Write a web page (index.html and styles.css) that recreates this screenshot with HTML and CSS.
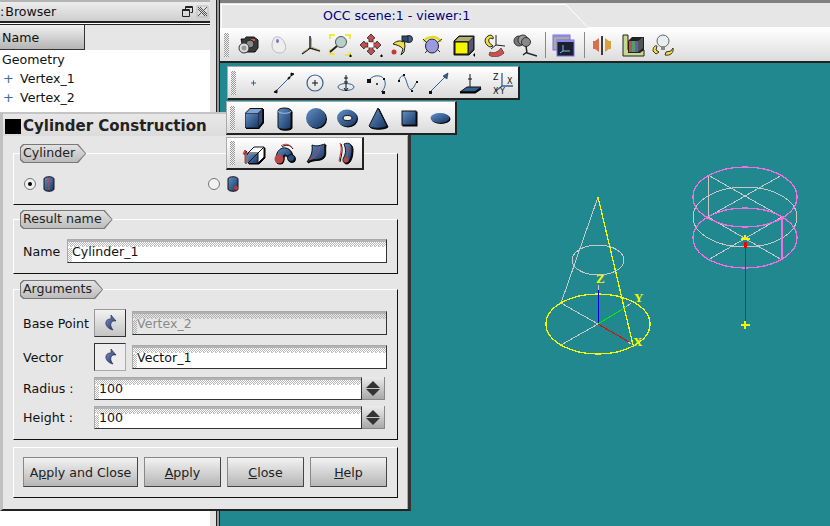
FILE: index.html
```html
<!DOCTYPE html>
<html lang="en">
<head>
    <meta charset="UTF-8">
    <title>OCC scene:1 - viewer:1</title>
    <link rel="stylesheet" href="styles.css">
</head>
<body>
<div class="desktop">

    <!-- object browser -->
    <div class="side">
        <div class="browser">
            <div class="dock-title">
                <span class="dock-name">: Browser</span>
                <span class="dock-btn">
                    <svg width="13" height="13" viewBox="0 0 13 13"><path d="M4.5 1.5h7v6h-2M1.5 4.5h7v7h-7z M4.5 1.5v3" fill="none" stroke="#222"/><path d="M4 2.5h7M1 5.5h7" stroke="#222"/></svg>
                </span>
                <span class="dock-btn">
                    <svg width="13" height="13" viewBox="0 0 13 13"><path d="M2 2l9 9M11 2l-9 9M2 4l7 7M4 2l7 7" stroke="#555" fill="none"/><path d="M1 1h11v11h-11z" fill="none" stroke="#bbb"/></svg>
                </span>
            </div>
            <div class="list-head"><span class="head-cell">Name</span></div>
            <ul class="tree">
                <li>Geometry</li>
                <li class="leaf"><span class="expand">+</span>Vertex_1</li>
                <li class="leaf"><span class="expand">+</span>Vertex_2</li>
            </ul>
        </div>
    </div>

    <!-- viewer -->
    <div class="viewer">
        <div class="tabs">
            <svg class="tab-edge" width="610" height="25" viewBox="0 0 610 25"><path d="M1.5 25V1.5H346L368 24.5H610" fill="none" stroke="#fff"/></svg>
            <span class="tab-text">OCC scene:1 - viewer:1</span>
        </div>
        <div class="main-bar">
            <span class="grip"></span>
            <span class="tool">
                <svg width="24" height="24" viewBox="0 0 24 24"><path d="M5 6h4l1-2h8l4 3v8l-3 4H8z" fill="#3a3a3a" stroke="#111"/><rect x="15" y="6" width="4" height="2" fill="#c55"/><circle cx="14" cy="11" r="4" fill="#888" stroke="#222"/><circle cx="8" cy="15" r="5" fill="#ddd" stroke="#333"/><circle cx="8" cy="15" r="2.5" fill="#999"/></svg>
            </span>
            <span class="tool">
                <svg width="24" height="24" viewBox="0 0 24 24"><path d="M7 5c4-3 9 0 11 6 2 5-1 9-5 9-5 0-8-3-8-8 0-3 1-5 2-7z" fill="#eee" stroke="#bbb"/><ellipse cx="10.500" cy="8" rx="1.500" ry="2" fill="#6f7fc8"/></svg>
            </span>
            <span class="tool">
                <svg width="24" height="24" viewBox="0 0 24 24"><path d="M12 3v12L4 21M12 15l10 3" fill="none" stroke="#222" stroke-width="1.500"/><path d="M13.500 5v9l8 3M10 16l-5 3" fill="none" stroke="#b8b070"/></svg>
            </span>
            <span class="tool">
                <svg width="24" height="24" viewBox="0 0 24 24"><path d="M2 6V2h5M17 2h5v4M2 16v5h5M17 22h5v-3" fill="none" stroke="#f2e600" stroke-width="1.500"/><circle cx="13" cy="9" r="5.500" fill="#b8d0cc" stroke="#555"/><path d="M9 13l-7 6" stroke="#222" stroke-width="2"/><path d="M21 23h3M22.500 21.500v3" stroke="#000"/></svg>
            </span>
            <span class="tool">
                <svg width="24" height="24" viewBox="0 0 24 24"><path d="M12 1l4 4-2 1v3h-4V6L8 5zM12 22l-4-4 2-1v-3h4v3l2 1zM1 12l4-4 1 2h3v4H6l-1 2zM22 12l-4 4-1-2h-3v-4h3l1-2z" fill="#c25050" stroke="#222" stroke-width=".8"/><rect x="9.500" y="9.500" width="5" height="5" fill="#fff"/><path d="M21 23h3M22.500 21.500v3" stroke="#000"/></svg>
            </span>
            <span class="tool">
                <svg width="24" height="24" viewBox="0 0 24 24"><circle cx="19" cy="6" r="3.500" fill="#44628a" stroke="#222"/><rect x="12" y="3" width="6" height="6" fill="#2d4a70" stroke="#222"/><path d="M3 11c3-3 7-4 10-2l1-2 1 6-1 6-3 3 2-6c-2-3-6-4-10-5z" fill="#f2e040" stroke="#222"/><circle cx="4" cy="19" r="2.500" fill="#c83838"/></svg>
            </span>
            <span class="tool">
                <svg width="24" height="24" viewBox="0 0 24 24"><ellipse cx="12" cy="13" rx="6.500" ry="7" fill="#9a9ae0" stroke="#222"/><path d="M4 9c2-6 13-7 17 0" fill="none" stroke="#e6d820" stroke-width="2.500"/><path d="M3 6l3 3M22 6l-4 3M5 20l3-3M20 19l-3-3" stroke="#333"/></svg>
            </span>
            <span class="tool">
                <svg width="24" height="24" viewBox="0 0 24 24"><path d="M3 8l5-5h15v14l-5 5H3z" fill="#333" stroke="#111"/><path d="M4 9h13v12H4z" fill="#f6f600" stroke="#111"/><path d="M4 8l4-4h14l-4 4z" fill="#b0b070"/><path d="M18 9l4-4v11l-4 4z" fill="#55557a"/><path d="M25 22h-3M23.500 20.500v3" stroke="#000"/></svg>
            </span>
            <span class="tool">
                <svg width="24" height="24" viewBox="0 0 24 24"><path d="M14 2v10l9 1M14 12l-5 4" fill="none" stroke="#222"/><path d="M6 3c3-2 6 0 5 3-3-2-5 0-4 3 1 2 3 3 4 4l-3 1C3 12 1 6 6 3z" fill="#f2e040" stroke="#222"/><path d="M8 19c4 2 8 0 11-4l3 5c-4 4-11 5-15 2z" fill="#d84c4c" stroke="#555"/></svg>
            </span>
            <span class="tool">
                <svg width="24" height="24" viewBox="0 0 24 24"><circle cx="6" cy="8" r="5" fill="#777" stroke="#333"/><circle cx="10" cy="7" r="5" fill="#999" stroke="#333"/><circle cx="13" cy="9" r="4.500" fill="#888" stroke="#333"/><path d="M13 13l1 7 10 3M14 19l-4 3" fill="none" stroke="#222" stroke-width="1.500"/></svg>
            </span>
            <span class="sep"></span>
            <span class="tool">
                <svg width="24" height="24" viewBox="0 0 24 24"><rect x="2" y="2" width="17" height="15" fill="#aaa" stroke="#7a6fe0"/><rect x="2" y="2" width="17" height="2" fill="#8f87e8"/><rect x="6" y="7" width="17" height="16" fill="#1a2030" stroke="#7a6fe0"/><rect x="6" y="7" width="17" height="2" fill="#8f87e8"/><path d="M12 12v6h7M12 18l-3 2" fill="none" stroke="#80c0e0"/></svg>
            </span>
            <span class="sep"></span>
            <span class="tool">
                <svg width="24" height="24" viewBox="0 0 24 24"><path d="M3 8h2l4-3v14l-4-3H3z" fill="#d87050"/><path d="M12 3v19" stroke="#000" stroke-width="1.500"/><path d="M21 8h-2l-4-3v14l4-3h2z" fill="#d8a040"/></svg>
            </span>
            <span class="tool">
                <svg width="24" height="24" viewBox="0 0 24 24"><path d="M2 2h5v15h16v6H2z" fill="#c8d890" stroke="#222"/><path d="M7 8l4-4h12v13l-4 3H7z" fill="#222"/><path d="M8 8h3v11H8z" fill="#c05050"/><path d="M11 8h3v11h-3z" fill="#50a060"/><path d="M14 8h3v11h-3z" fill="#6060c0"/><path d="M17 8l5-4v11l-5 4z" fill="#555"/></svg>
            </span>
            <span class="tool">
                <svg width="24" height="24" viewBox="0 0 24 24"><circle cx="12" cy="8" r="6" fill="#e8eef0" stroke="#666"/><rect x="10" y="13" width="4" height="4" fill="#888"/><path d="M2 18c0-4 2-6 4-5l-1 4 3 2-3 2z" fill="#f2e040" stroke="#333"/><path d="M22 15c1 5-3 8-8 7l1-3 5-1z" fill="#f2e040" stroke="#333"/></svg>
            </span>
        </div>
        <div class="view-body">
            <svg class="scene" width="610" height="463" viewBox="220 63 610 463" shape-rendering="crispEdges">
                <defs>
                    <linearGradient id="blue" x1="0" y1="0" x2="1" y2="1">
                        <stop offset="0" stop-color="#6390c8"/>
                        <stop offset="1" stop-color="#173560"/>
                    </linearGradient>
                    <linearGradient id="arrow" x1="0" y1="0" x2="1" y2="1">
                        <stop offset="0" stop-color="#7f96d0"/>
                        <stop offset="1" stop-color="#1c2a52"/>
                    </linearGradient>
                </defs>
                <!-- cone -->
                <g fill="none" stroke="#c8c8c8">
                    <ellipse cx="598" cy="260" rx="26" ry="15"/>
                    <path d="M598 197L561 303L598 324L561 345"/>
                    <path d="M598 285v6M626 307l5-4M631 344l-3-2"/>
                </g>
                <g fill="none" stroke="#f6f600" stroke-width="1.300">
                    <ellipse cx="598" cy="324" rx="52" ry="30"/>
                    <path d="M598 197L633 345"/>
                </g>
                <path d="M598 324v-34" stroke="#0000e0" fill="none"/>
                <path d="M598 324l28-17" stroke="#00f000" fill="none"/>
                <path d="M598 324l31 18" stroke="#f00000" fill="none"/>
                <text class="axis" x="596" y="283">Z</text>
                <text class="axis" x="634" y="302">Y</text>
                <text class="axis" x="633" y="346">X</text>
                <!-- two stacked cylinders -->
                <g fill="none" stroke="#c8c8c8">
                    <ellipse cx="745" cy="217" rx="52" ry="30"/>
                    <path d="M708 175V217L782 260M782 175L708 217L782 260M708 175L782 217M782 217L708 260"/>
                </g>
                <g fill="none" stroke="#f070e0" stroke-width="1.300">
                    <ellipse cx="745" cy="197" rx="52" ry="30"/>
                    <ellipse cx="745" cy="238" rx="52" ry="30"/>
                    <path d="M782 217V260"/>
                </g>
                <path d="M745 245V325" stroke="#e00000" fill="none"/>
                <rect x="744" y="242" width="3" height="6" fill="#f00000"/>
                <path d="M741 325h9M745 321v8M741 239h9M745 235v4" stroke="#f6f600" stroke-width="1.500" fill="none"/>
            </svg>
        </div>
    </div>

    <!-- dialog -->
    <div class="dialog">
        <div class="dlg-title"><span class="dlg-mark"></span>Cylinder Construction</div>

        <div class="group group-type">
            <div class="tag"><span>Cylinder</span></div>
            <div class="type-row">
                <span class="type-opt">
                    <span class="radio on"></span>
                    <svg width="12" height="16" viewBox="0 0 12 16"><path d="M1 3c0-3 10-3 10 0v10c0 3-10 3-10 0z" fill="url(#blue)" stroke="#111"/><path d="M6 2v12M3 5h6" stroke="#c04848" fill="none"/></svg>
                </span>
                <span class="type-opt">
                    <span class="radio"></span>
                    <svg width="12" height="16" viewBox="0 0 12 16"><path d="M1 3c0-3 10-3 10 0v10c0 3-10 3-10 0z" fill="url(#blue)" stroke="#111"/><circle cx="9" cy="12" r="2" fill="#d03030"/></svg>
                </span>
            </div>
        </div>

        <div class="group group-name">
            <div class="tag"><span>Result name</span></div>
            <div class="field-row">
                <label class="name-label">Name</label>
                <div class="field grow">Cylinder_1</div>
            </div>
        </div>

        <div class="group group-args">
            <div class="tag"><span>Arguments</span></div>
            <div class="arg-rows">
                <div class="field-row">
                    <label class="arg-label">Base Point</label>
                    <span class="sel-btn">
                        <svg width="14" height="18" viewBox="0 0 14 18"><path d="M8 1l5 6-3 0c-3 2-3 5 0 9-5-1-8-5-7-8 1-3 3-3 5-3z" fill="url(#arrow)" stroke="#1a2448" stroke-width=".6"/></svg>
                    </span>
                    <div class="field grow disabled">Vertex_2</div>
                </div>
                <div class="field-row">
                    <label class="arg-label">Vector</label>
                    <span class="sel-btn pressed">
                        <svg width="14" height="18" viewBox="0 0 14 18"><path d="M8 1l5 6-3 0c-3 2-3 5 0 9-5-1-8-5-7-8 1-3 3-3 5-3z" fill="url(#arrow)" stroke="#1a2448" stroke-width=".6"/></svg>
                    </span>
                    <div class="field grow">Vector_1</div>
                </div>
                <div class="field-row spin-row">
                    <label class="arg-label">Radius :</label>
                    <div class="field grow">100</div>
                    <span class="spin"><i class="up"></i><i class="down"></i></span>
                </div>
                <div class="field-row spin-row">
                    <label class="arg-label">Height :</label>
                    <div class="field grow">100</div>
                    <span class="spin"><i class="up"></i><i class="down"></i></span>
                </div>
            </div>
        </div>

        <div class="group group-buttons">
            <button class="wide">A<u>p</u>ply and Close</button>
            <button><u>A</u>pply</button>
            <button><u>C</u>lose</button>
            <button><u>H</u>elp</button>
        </div>
    </div>

    <!-- floating toolbars, these sit over the dialog -->
    <div class="float-bar float-basic">
        <span class="grip"></span>
        <span class="tool">
            <svg width="24" height="24" viewBox="0 0 24 24"><path d="M10 12h5M12.500 9.500v5" stroke="#36608f"/></svg>
        </span>
        <span class="tool">
            <svg width="24" height="24" viewBox="0 0 24 24"><path d="M4 20L20 4" stroke="#36608f"/><path d="M2 21l3 1 0-3zM22 3l-3-1 0 3z" fill="#111" stroke="#111"/><path d="M16 8l2-2" stroke="#111" stroke-width="2"/></svg>
        </span>
        <span class="tool">
            <svg width="24" height="24" viewBox="0 0 24 24"><circle cx="12" cy="12" r="8" fill="none" stroke="#36608f" stroke-width="1.200"/><path d="M9 12h6M12 9v6" stroke="#111"/></svg>
        </span>
        <span class="tool">
            <svg width="24" height="24" viewBox="0 0 24 24"><ellipse cx="12" cy="16" rx="8" ry="3.500" fill="none" stroke="#36608f"/><path d="M12 4v16" stroke="#111"/><path d="M10 7h4M10 11h4M10 17l2 3 2-3" stroke="#111" fill="none"/></svg>
        </span>
        <span class="tool">
            <svg width="24" height="24" viewBox="0 0 24 24"><path d="M4 10c2-6 12-7 15-2 3 5 0 11-3 13" fill="none" stroke="#36608f"/><path d="M2 8h4v4H2zM17 20h3v3h-3zM18 7h2v2h-2z" fill="#111"/><circle cx="12" cy="13" r="1" fill="#111"/></svg>
        </span>
        <span class="tool">
            <svg width="24" height="24" viewBox="0 0 24 24"><path d="M3 9c2-5 5-6 7 0s3 11 6 9 3-6 5-7" fill="none" stroke="#36608f"/><path d="M7 3h2v2H7zM2 9h2v2H2zM15 19h2v2h-2zM20 10h2v2h-2z" fill="#111"/></svg>
        </span>
        <span class="tool">
            <svg width="24" height="24" viewBox="0 0 24 24"><path d="M4 20L20 4" stroke="#36608f"/><path d="M2 20h3v3H2z" fill="#111"/><path d="M21 2l-1 6-4-3z" fill="#36608f" stroke="#111" stroke-width=".5"/></svg>
        </span>
        <span class="tool">
            <svg width="24" height="24" viewBox="0 0 24 24"><path d="M2 21l7-5h14l-6 5z" fill="#36608f" stroke="#111"/><path d="M2 21.500h15l6-4" fill="none" stroke="#000" stroke-width="2"/><path d="M12 3v13M10 8h4" stroke="#111"/></svg>
        </span>
        <span class="tool">
            <svg width="24" height="24" viewBox="0 0 24 24"><path d="M13 2v13H24M13 15l-6 5" fill="none" stroke="#36608f" stroke-width="1.300"/><text class="tiny" x="4" y="9">Z</text><text class="tiny" x="18" y="13">X</text><text class="tiny" x="11" y="23">Y</text><text class="tiny" x="4" y="23">X</text></svg>
        </span>
    </div>

    <div class="float-bar float-prim">
        <span class="grip"></span>
        <span class="tool">
            <svg width="24" height="24" viewBox="0 0 24 24"><path d="M3 7l5-5h13v14l-5 6H3z" fill="#111"/><path d="M3.500 7.500h13v14h-13z" fill="url(#blue)"/><path d="M4 7l4-4h12l-4 4z" fill="#7fa3d0"/><path d="M17 7l3-4v13l-3 4z" fill="#2a4c80"/></svg>
        </span>
        <span class="tool">
            <svg width="24" height="24" viewBox="0 0 24 24"><path d="M5 5c0-4 13-4 13 0v16c0 3-13 3-13 0z" fill="url(#blue)" stroke="#111"/><path d="M5 5c0 3 13 3 13 0" fill="none" stroke="#9fc0e0"/></svg>
        </span>
        <span class="tool">
            <svg width="24" height="24" viewBox="0 0 24 24"><circle cx="12" cy="12" r="10" fill="url(#blue)"/></svg>
        </span>
        <span class="tool">
            <svg width="24" height="24" viewBox="0 0 24 24"><ellipse cx="12" cy="12" rx="10" ry="8.500" fill="url(#blue)"/><ellipse cx="12.500" cy="12" rx="4.500" ry="2.500" fill="#eee" stroke="#111"/></svg>
        </span>
        <span class="tool">
            <svg width="24" height="24" viewBox="0 0 24 24"><path d="M12 2L3 20c2 3 15 3 18 0z" fill="url(#blue)" stroke="#111"/></svg>
        </span>
        <span class="tool">
            <svg width="24" height="24" viewBox="0 0 24 24"><rect x="5" y="5" width="14" height="14" fill="url(#blue)" stroke="#111"/></svg>
        </span>
        <span class="tool">
            <svg width="24" height="24" viewBox="0 0 24 24"><ellipse cx="12" cy="12" rx="9.500" ry="5" fill="url(#blue)"/></svg>
        </span>
    </div>

    <div class="float-bar float-ops">
        <span class="grip"></span>
        <span class="tool">
            <svg width="24" height="24" viewBox="0 0 24 24"><path d="M3 9v13M1 13l2-4 2 4" fill="none" stroke="#d03030"/><path d="M6 12l6-6h10v10l-6 6H6z" fill="#fff" stroke="#111"/><path d="M6 13l10 0v9H6z" fill="url(#blue)"/><path d="M16 12l6-6M6 12h10v10M16 12L6 22M22 6l-6 6" fill="none" stroke="#111"/></svg>
        </span>
        <span class="tool">
            <svg width="24" height="24" viewBox="0 0 24 24"><path d="M8 5c4-3 9-2 11 2" fill="none" stroke="#d03030"/><path d="M3 18c0-9 6-12 10-11 5 1 6 6 6 8h-6c0-2-3-2-3 3z" fill="url(#blue)" stroke="#111"/><circle cx="6" cy="18" r="4.500" fill="#b84848"/><circle cx="18" cy="17" r="3.500" fill="#2b4c7e" stroke="#111"/></svg>
        </span>
        <span class="tool">
            <svg width="24" height="24" viewBox="0 0 24 24"><path d="M8 4c5 2 9 0 13-1-1 6 1 10-2 13-4 4-9 1-16 5 3-5 6-8 5-17z" fill="url(#blue)" stroke="#111"/><path d="M6 18c5-2 9-6 10-12" fill="none" stroke="#c04848"/></svg>
        </span>
        <span class="tool">
            <svg width="24" height="24" viewBox="0 0 24 24"><path d="M9 3c5-2 8 0 8 5 0 7-2 13-6 14-3 0-4-3-2-6 2-4 2-8 0-13z" fill="url(#blue)" stroke="#111"/><path d="M13 5c1 5-1 11-2 14" fill="none" stroke="#c04848"/><circle cx="11" cy="19" r="2.500" fill="#b84848"/><path d="M5 2c2 5 1 9-1 18" fill="none" stroke="#d03030"/></svg>
        </span>
    </div>
</div>
</body>
</html>
```
FILE: styles.css
```css
html, body { margin: 0; padding: 0; }
body { font-family: "DejaVu Sans", sans-serif; font-size: 12.6px; color: #111; background: #e4e4e4; }

.desktop { position: relative; width: 830px; height: 526px; overflow: hidden; display: flex; }

/* left dock */
.side { width: 216px; background: #e2e2e2; }
.browser { width: 210px; height: 526px; background: #fff; }
.dock-title {
    height: 19px;
    border-top: 2px solid #b4b4b4;
    border-bottom: 2px solid #222;
    background: linear-gradient(#ececec, #cfcfcf);
    display: flex;
    align-items: center;
}
.dock-name { flex: 1; word-spacing: -3px; }
.dock-btn { width: 14px; height: 15px; margin-right: 1px; display: flex; align-items: center; justify-content: center; }
.list-head { height: 25px; margin-top: 1px; border-top: 1px solid #222; background: #e6e6e6; }
.head-cell {
    display: flex;
    align-items: center;
    box-sizing: border-box;
    width: 85px;
    height: 25px;
    padding-left: 2px;
    background: linear-gradient(#f2f2f2, #b4b4b4);
    border-right: 1px solid #333;
    border-bottom: 1px solid #333;
}
.tree { list-style: none; margin: 0; padding: 0 0 0 2px; }
.tree li { height: 19px; line-height: 19px; white-space: nowrap; }
.tree li.leaf { display: flex; }
.expand { width: 18px; color: #3a6a9a; font-size: 13px; padding-left: 1px; box-sizing: border-box; }

/* viewer */
.viewer { width: 614px; display: flex; flex-direction: column; box-sizing: border-box; border-left: 4px double #222; background: #999; }
.tabs { position: relative; height: 25px; border-top: 3px solid #808080; background: #e6e6e6; }
.tab-edge { position: absolute; left: 0; top: 0; }
.tab-text { position: absolute; left: 103px; top: 5px; color: #000080; }
.main-bar {
    height: 33px;
    display: flex;
    align-items: center;
    padding-left: 4px;
    background: linear-gradient(#fff, #dcdcdc);
    border-bottom: 2px solid #222;
    box-sizing: content-box;
}
.main-bar .tool { flex: 0 0 30.7px; }
.main-bar .grip { margin-right: 4px; }
.sep { width: 1px; height: 26px; background: #888; margin: 0 2px 0 5px; }
.view-body { flex: 1; background: #218890; }
.scene { display: block; }
.axis { font-family: "Liberation Serif", serif; font-weight: bold; font-size: 13px; fill: #f6f600; }
.tiny { font-family: "DejaVu Sans", sans-serif; font-size: 8px; fill: #111; }

/* toolbars */
.tool { flex: 0 0 31px; height: 26px; display: flex; align-items: center; justify-content: center; }
.grip {
    flex: 0 0 5px;
    width: 5px;
    height: 24px;
    background: repeating-conic-gradient(#999 0 25%, #f2f2f2 0 50%) 0 0 / 2px 2px;
}
.float-bar {
    position: absolute;
    display: flex;
    align-items: center;
    box-sizing: border-box;
    padding-left: 3px;
    background: linear-gradient(#fff, #dadada);
    border: 1px solid #aaa;
    border-right: 2px solid #222;
    border-bottom: 2px solid #222;
}
.float-bar .grip { margin-right: 3px; }
.float-prim svg, .float-ops svg { filter: drop-shadow(1px 1px 0 #000); }
.float-basic { left: 227px; top: 66px; width: 293px; height: 34px; }
.float-basic .grip { margin-right: 1px; }
.float-prim { left: 226px; top: 101px; width: 231px; height: 34px; }
.float-ops { left: 226px; top: 137px; width: 138px; height: 33px; }

/* dialog */
.dialog {
    position: absolute;
    left: 0;
    top: 112px;
    box-sizing: border-box;
    width: 411px;
    height: 399px;
    background: #e6e6e6;
    border-top: 2px solid #c4c4c4;
    border-left: 3px solid #c0c0c0;
    border-right: 3px solid #333;
    border-bottom: 2px solid #222;
    box-shadow: inset -1px 0 0 #aaa;
    display: flex;
    flex-direction: column;
}
.dlg-title {
    box-sizing: border-box;
    height: 22px;
    padding-top: 2px;
    display: flex;
    align-items: center;
    font-size: 15px;
    font-weight: bold;
    color: #222;
    background: linear-gradient(#e8e8e8, #dcdcdc);
}
.dlg-mark { width: 16px; height: 15px; background: #000; margin: 0 2px 0 2px; }

.group {
    position: relative;
    box-sizing: border-box;
    margin: 0 10px 0 10px;
    border-top: 1px solid #fff;
    border-left: 1px solid #fff;
    border-right: 1px solid #111;
    border-bottom: 1px solid #111;
    padding: 0 10px 0 9px;
}
.group-type { height: 52px; margin-top: 17px; }
.group-name { height: 55px; margin-top: 14px; }
.group-args { height: 151px; margin-top: 15px; }
.group-buttons { height: 51px; margin-top: 7px; padding-top: 9px; display: flex; gap: 6px; }

/* pentagon tag on each group, outer box gives the outline */
.tag {
    display: table;
    height: 19px;
    margin: -10px 0 0 -3px;
    padding: 1px;
    box-sizing: border-box;
    background: #777;
    clip-path: polygon(3px 0, calc(100% - 8px) 0, 100% 50%, calc(100% - 8px) 100%, 3px 100%, 0 calc(100% - 3px), 0 3px);
}
.tag span {
    display: block;
    height: 17px;
    line-height: 16px;
    padding: 0 10px 0 2px;
    color: #222;
    background: linear-gradient(#e2e2e2, #bcbcbc);
    clip-path: polygon(3px 0, calc(100% - 8px) 0, 100% 50%, calc(100% - 8px) 100%, 3px 100%, 0 calc(100% - 3px), 0 3px);
}

.type-row { display: grid; grid-template-columns: 184px 1fr; margin: 13px 0 0 1px; }
.type-opt { display: flex; align-items: center; gap: 7px; }
.radio { width: 10px; height: 10px; border-radius: 50%; border: 1px solid #777; background: #f2f2f2; position: relative; }
.radio.on::after { content: ""; position: absolute; left: 3px; top: 3px; width: 4px; height: 4px; border-radius: 50%; background: #000; }

.field-row { display: flex; align-items: center; }
.group-name .field-row { margin-top: 10px; }
.name-label { width: 44px; }
.field {
    box-sizing: border-box;
    height: 24px;
    line-height: 23px;
    padding-left: 4px;
    border-top: 1px solid #aaa;
    border-left: 1px solid #aaa;
    border-right: 1px solid #333;
    border-bottom: 1px solid #333;
    background:
        linear-gradient(#fff 0 0) 4px 8px / 100% 100% no-repeat,
        repeating-conic-gradient(#c4c4c4 0 25%, #fff 0 100%) 0 6px / 4px 2px repeat-x,
        linear-gradient(#b4b4b4 0 0) 0 0 / 100% 2px no-repeat,
        repeating-conic-gradient(#b8b8b8 0 25%, #fff 0 50%) 0 0 / 2px 2px;
}
.field.disabled {
    color: #8a8a8a;
    background:
        linear-gradient(#e6e6e6 0 0) 4px 8px / 100% 100% no-repeat,
        repeating-conic-gradient(#c0c0c0 0 25%, #e6e6e6 0 100%) 0 6px / 4px 2px repeat-x,
        linear-gradient(#b0b0b0 0 0) 0 0 / 100% 2px no-repeat,
        repeating-conic-gradient(#b0b0b0 0 25%, #e6e6e6 0 50%) 0 0 / 2px 2px;
}
.grow { flex: 1; }

.arg-rows { display: flex; flex-direction: column; gap: 6px; margin-top: 10px; }
.arg-label { flex: 0 0 71px; }
.sel-btn {
    box-sizing: border-box;
    flex: 0 0 32px;
    height: 28px;
    margin-right: 6px;
    display: flex;
    align-items: center;
    justify-content: center;
    border: 1px solid #999;
    border-right-color: #333;
    border-bottom-color: #333;
    background: linear-gradient(#f2f2f2, #c4c4c4);
}
.sel-btn.pressed {
    border-color: #333 #aaa #aaa #333;
    background: #ededed;
}
.spin-row { height: 23px; margin-right: 2px; }
.spin-row .field { height: 23px; line-height: 22px; }
.spin {
    box-sizing: border-box;
    flex: 0 0 23px;
    height: 23px;
    display: flex;
    flex-direction: column;
    align-items: center;
    justify-content: center;
    gap: 1px;
    border-right: 1px solid #888;
    border-bottom: 1px solid #888;
    background: linear-gradient(#ececec, #a8a8a8);
}
.spin i { width: 0; height: 0; border-left: 7px solid transparent; border-right: 7px solid transparent; }
.spin .up { border-bottom: 7px solid #333; }
.spin .down { border-top: 7px solid #333; }

button {
    box-sizing: border-box;
    width: 77px;
    height: 30px;
    padding: 0;
    font-family: inherit;
    font-size: 12.6px;
    color: #222;
    border: 1px solid #888;
    border-right-color: #444;
    border-bottom-color: #444;
    background: linear-gradient(#f2f2f2, #b6b6b6);
}
button.wide { width: 115px; }
```
